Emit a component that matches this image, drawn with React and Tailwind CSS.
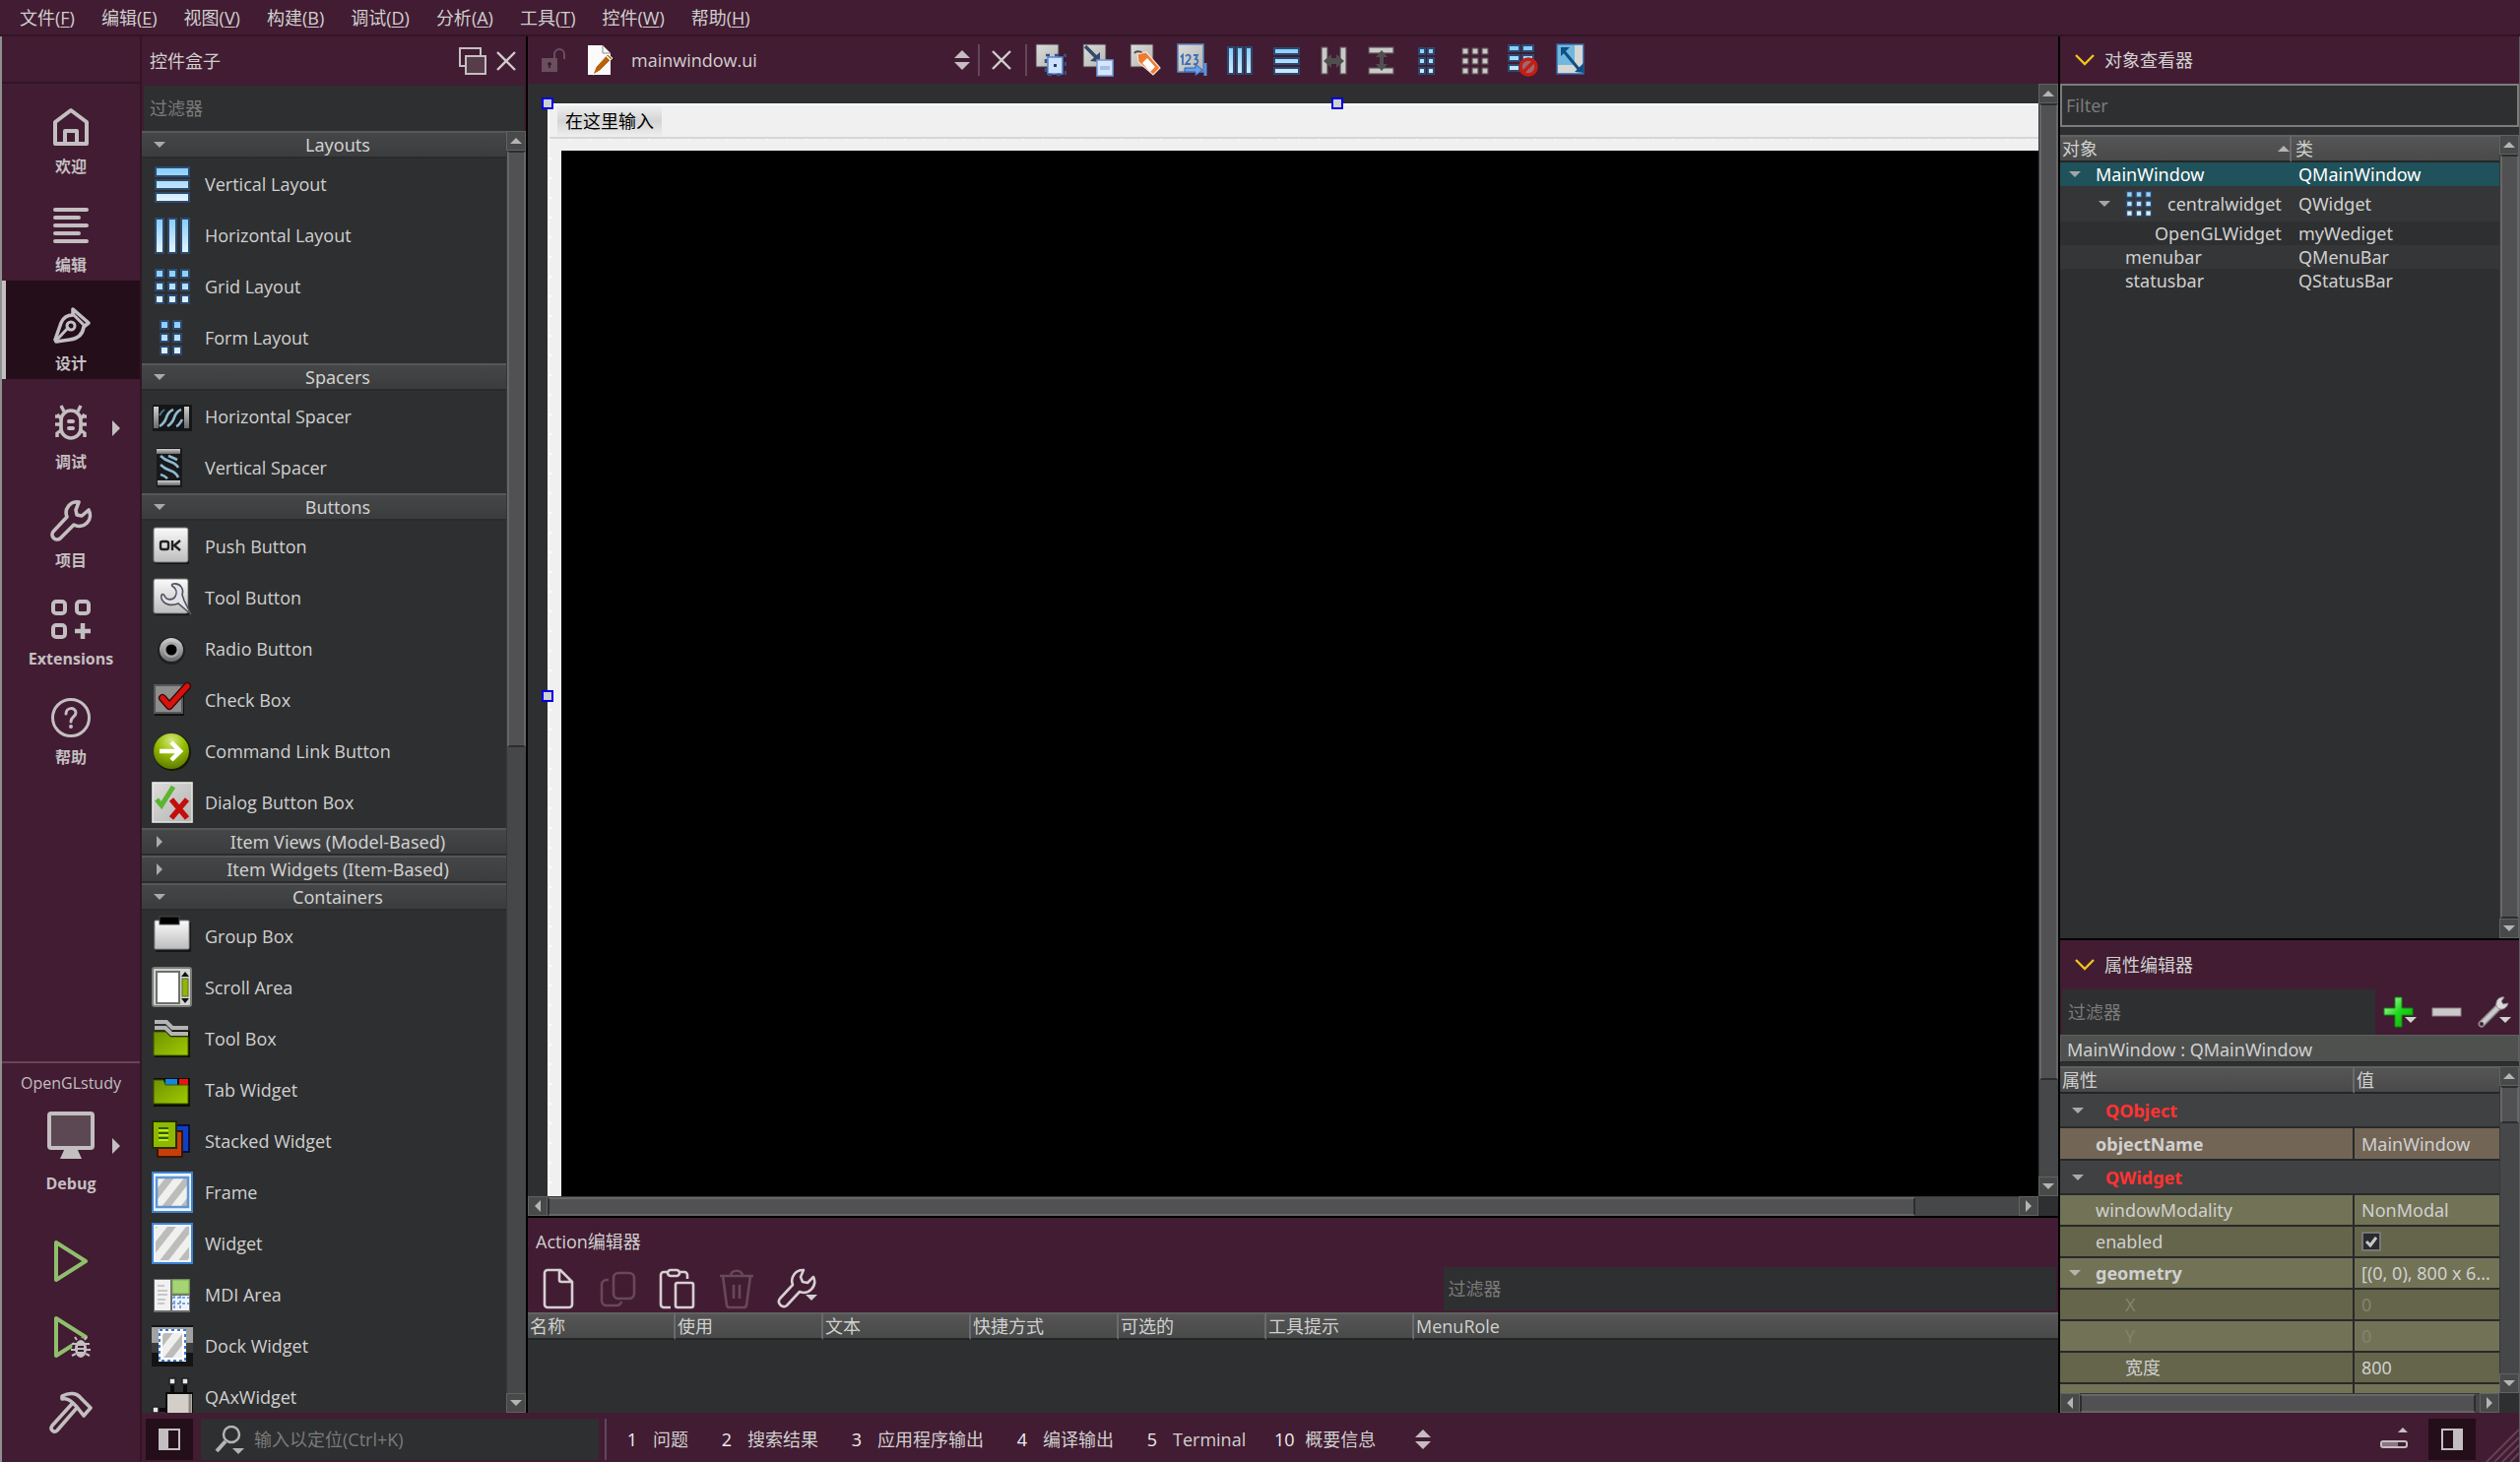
import React, { useState } from 'react';

// Shared svg helpers

const Tri = ({ dir = 'down', size = 'size-3', className = '' }) => {
  const points = {
    down: '0,3 12,3 6,9',
    up: '0,9 12,9 6,3',
    right: '3,0 9,6 3,12',
    left: '9,0 3,6 9,12',
  };
  return (
    <svg viewBox="0 0 12 12" className={`shrink-0 ${size} ${className}`}>
      <polygon points={points[dir]} fill="currentColor" />
    </svg>
  );
};

const UpDown = ({ className = '' }) => (
  <svg viewBox="0 0 16 20" className={`h-5 w-4 shrink-0 text-[#c6bcc2] ${className}`}>
    <path d="M0 8 8 0l8 8zM0 12l8 8 8-8z" fill="currentColor" />
  </svg>
);

const Gradients = () => (
  <svg width="0" height="0" className="absolute" aria-hidden="true">
    <defs>
      <linearGradient id="blue" x1="0" y1="0" x2="0" y2="42" gradientUnits="userSpaceOnUse">
        <stop offset="0.1" stopColor="#86cdfb" />
        <stop offset="0.9" stopColor="#e4f4ff" />
      </linearGradient>
      <linearGradient id="paper" x1="0" y1="0" x2="0" y2="1">
        <stop offset="0" stopColor="#fafafa" />
        <stop offset="1" stopColor="#bdbdbd" />
      </linearGradient>
      <linearGradient id="paper2" x1="0" y1="0" x2="1" y2="1">
        <stop offset="0" stopColor="#dcdcdc" />
        <stop offset="1" stopColor="#b4b4b0" />
      </linearGradient>
      <linearGradient id="lime" x1="0" y1="0" x2="1" y2="1">
        <stop offset="0" stopColor="#6f9200" />
        <stop offset="1" stopColor="#9fcb00" />
      </linearGradient>
      <linearGradient id="metal" x1="0" y1="0" x2="0" y2="1">
        <stop offset="0" stopColor="#d0d0d0" />
        <stop offset="1" stopColor="#6a6a6a" />
      </linearGradient>
      <radialGradient id="ball" cx="0.5" cy="0.2" r="0.8">
        <stop offset="0" stopColor="#d4e87c" />
        <stop offset="0.5" stopColor="#94bb00" />
        <stop offset="1" stopColor="#5f7b00" />
      </radialGradient>
      <linearGradient id="green" x1="0" y1="0" x2="1" y2="1">
        <stop offset="0" stopColor="#d6ffd0" />
        <stop offset="0.5" stopColor="#1fd81b" />
        <stop offset="1" stopColor="#08a806" />
      </linearGradient>
      <pattern id="hatch" width="15" height="15" patternUnits="userSpaceOnUse" patternTransform="rotate(38)">
        <rect width="15" height="15" fill="#f0f0ee" />
        <rect width="7" height="15" fill="#bcbcba" />
      </pattern>
    </defs>
  </svg>
);

const cell = { fill: 'url(#blue)', stroke: '#2d4a70', strokeWidth: 2 };
const grayCell = { fill: '#c9c9c7', stroke: '#5e5258', strokeWidth: 1.2 };

const boxIcons = {
  vlayout: [4, 17, 30].map((y) => <rect key={y} x="4" y={y} width="34" height="9" {...cell} />),
  hlayout: [4, 17, 30].map((x) => <rect key={x} x={x} y="4" width="8" height="35" {...cell} />),
  grid: [4, 17, 30].map((y) =>
    [4, 17, 30].map((x) => <rect key={`${x}-${y}`} x={x} y={y} width="8" height="8" {...cell} />)
  ),
  form: [4, 17, 30].map((y) =>
    [9, 22].map((x) => <rect key={`${x}-${y}`} x={x} y={y} width="8" height="8" {...cell} />)
  ),
  hspacer: (
    <>
      <rect x="1" y="9" width="40" height="27" fill="#151617" />
      <rect x="2" y="11" width="5" height="22" fill="url(#metal)" />
      <rect x="33" y="11" width="5" height="22" fill="url(#metal)" />
      <path d="M8 31q5-3 7-9t7-8M16 31q5-3 7-9t7-8M25 31q3-1 6-7" fill="none" stroke="#8fb9cf" strokeWidth="2.6" />
      <path d="M8 20q2-4 5-6" fill="none" stroke="#4b748a" strokeWidth="2" />
    </>
  ),
  vspacer: (
    <>
      <rect x="5" y="1" width="26" height="40" fill="#17191a" />
      <rect x="5" y="2" width="24" height="5" fill="url(#metal)" />
      <rect x="6" y="34" width="23" height="5" fill="url(#metal)" />
      <path d="M9 9q4 4 10 6t8 6M9 18q4 4 10 6t8 7M17 9q5 2 9 4M9 28q4 1 7 4" fill="none" stroke="#8fb9cf" strokeWidth="2.6" />
    </>
  ),
  push: (
    <>
      <rect x="3" y="4" width="35" height="35" rx="2" fill="#111" />
      <rect x="2" y="2" width="35" height="35" rx="2" fill="url(#paper)" stroke="#777" />
      <rect x="9" y="16" width="8" height="8" rx="2" fill="none" stroke="#222" strokeWidth="2.4" />
      <path d="M21 15v10M29 15l-6 5 6 5" fill="none" stroke="#222" strokeWidth="2.4" />
    </>
  ),
  tool: (
    <>
      <rect x="3" y="4" width="35" height="35" rx="2" fill="#111" />
      <rect x="2" y="2" width="35" height="35" rx="2" fill="url(#paper)" stroke="#777" />
      <path d="M22 7c7-1 11 5 9 11l2 6 7 14-13-11c-7 3-15 1-17-5-1-4 1-6 3-3 2 5 8 5 11 1 2-4 1-8-2-10-2-1-2-3 0-3z" fill="#e2e2ec" stroke="#505058" strokeWidth="1.6" />
    </>
  ),
  radio: (
    <>
      <circle cx="20" cy="23" r="14" fill="#1f2021" />
      <circle cx="20" cy="22" r="12" fill="url(#metal)" />
      <circle cx="20" cy="22" r="8" fill="#a6a6a6" />
      <circle cx="20" cy="22" r="5.5" fill="#000" />
    </>
  ),
  check: (
    <>
      <rect x="3" y="7" width="30" height="30" fill="#111" />
      <rect x="3" y="6" width="28" height="28" fill="#8d8d8b" stroke="#55585a" strokeWidth="2" />
      <path d="m11 19 7 8L36 7" fill="none" stroke="#3a0605" strokeWidth="8" strokeLinecap="round" strokeLinejoin="round" />
      <path d="m11 19 7 8L36 7" fill="none" stroke="#d5120f" strokeWidth="5.5" strokeLinecap="round" strokeLinejoin="round" />
    </>
  ),
  link: (
    <>
      <circle cx="21" cy="22" r="19" fill="#151a05" />
      <circle cx="20" cy="21" r="18" fill="url(#ball)" />
      <path d="M8 21h19M20 12l9 9-9 9" fill="none" stroke="#fff" strokeWidth="4.5" />
    </>
  ),
  dialog: (
    <>
      <rect x="0" y="0" width="42" height="42" fill="#8e8e8c" />
      <rect x="1" y="1" width="40" height="40" fill="url(#paper2)" stroke="#f5f5f5" />
      <path d="m5 18 5 6L22 5" fill="none" stroke="#5cb531" strokeWidth="5" />
      <path d="m20 18 16 19M36 18 20 37" fill="none" stroke="#c40d0d" strokeWidth="5.5" />
    </>
  ),
  group: (
    <>
      <rect x="4" y="7" width="36" height="30" fill="#151617" />
      <rect x="3" y="5" width="35" height="29" rx="1" fill="url(#paper)" stroke="#8d8d8d" />
      <rect x="8" y="1" width="20" height="8" fill="#000" stroke="#4b4b4b" strokeWidth="1" />
    </>
  ),
  scroll: (
    <>
      <rect x="1" y="1" width="39" height="39" rx="2" fill="#d4d4d2" stroke="#7c7c7a" strokeWidth="2" />
      <rect x="5" y="5" width="23" height="32" fill="#fff" stroke="#6f6f6d" strokeWidth="2" />
      <path d="m34 5 4 5h-8zM34 37l4-5h-8z" fill="#111" />
      <rect x="31" y="12" width="6" height="18" fill="#8fb800" stroke="#5e6b32" />
    </>
  ),
  toolbox: (
    <>
      <rect x="3" y="13" width="36" height="27" fill="#0d0f05" />
      <path d="M3 4h12l6 6h16M3 10h11l6 6h17" fill="none" stroke="#b4b4b4" strokeWidth="4" />
      <path d="M2 14h12l5 5h18v19H2z" fill="url(#lime)" stroke="#3f5200" />
    </>
  ),
  tab: (
    <>
      <rect x="2" y="9" width="37" height="29" fill="#0d0f05" />
      <rect x="14" y="10" width="12" height="6" fill="#1287e0" />
      <rect x="28" y="10" width="9" height="6" fill="#ee1111" />
      <path d="M2 11h10l2 5h23v19H2z" fill="url(#lime)" stroke="#3f5200" />
    </>
  ),
  stacked: (
    <>
      <rect x="19" y="5" width="19" height="27" fill="#0d3fc9" stroke="#06103a" strokeWidth="2" />
      <rect x="6" y="11" width="25" height="26" fill="#c43f0a" stroke="#3b1304" strokeWidth="2" />
      <rect x="1" y="1" width="24" height="27" fill="#8fb800" stroke="#232b05" strokeWidth="2" />
      <path d="M7 8h10M7 13h10M7 18h10" stroke="#2c5c07" strokeWidth="2" />
      <path d="M7 10h10M7 15h10M7 20h10" stroke="#c3ea16" strokeWidth="2" />
    </>
  ),
  frame: (
    <>
      <rect x="1" y="1" width="40" height="40" fill="#eef4fb" stroke="#3d83d3" strokeWidth="2" />
      <rect x="5" y="6" width="32" height="30" fill="url(#hatch)" stroke="#5f96d6" strokeWidth="2.5" />
    </>
  ),
  widget: (
    <>
      <rect x="1" y="1" width="40" height="40" fill="#eef4fb" stroke="#3d83d3" strokeWidth="2" />
      <rect x="4" y="4" width="34" height="34" fill="url(#hatch)" />
    </>
  ),
  mdi: (
    <>
      <rect x="2" y="5" width="37" height="34" fill="#6c6d6d" />
      <rect x="3" y="6" width="16" height="31" fill="#f1f1f1" />
      <path d="M6 12h7M6 17h10M6 21h10M6 26h8M6 30h7" stroke="#b9b9b9" strokeWidth="1.5" />
      <rect x="21" y="6" width="17" height="14" fill="#a5d475" stroke="#7ba84d" />
      <rect x="21" y="22" width="17" height="15" fill="#eef3fa" />
      <path d="M21 24h17M23 22v15M29 22v15M21 30h17" stroke="#7ba3dc" strokeWidth="2" strokeDasharray="3 2" />
    </>
  ),
  dock: (
    <>
      <rect width="42" height="42" fill="#141414" />
      <rect y="2" width="42" height="16" fill="#a2a2a2" />
      <rect y="18" width="42" height="10" fill="#3d3d3d" />
      <rect x="9" y="6" width="24" height="29" fill="url(#hatch)" stroke="#fff" strokeWidth="4" />
      <rect x="8" y="5" width="26" height="31" fill="none" stroke="#3a7bd0" strokeWidth="2" strokeDasharray="3 3" />
    </>
  ),
  qax: (
    <>
      <path d="M21 4v14M34 4v14M3 34h14" stroke="#0a0a0a" strokeWidth="4" />
      <rect x="15" y="17" width="27" height="28" fill="#d3cfc8" stroke="#0a0a0a" strokeWidth="2" />
      <path d="M39 18v26" stroke="#8b8883" strokeWidth="3" />
      <rect x="18" y="2" width="6" height="6" fill="#e8e8e8" stroke="#222" strokeWidth="1.5" />
      <rect x="31" y="2" width="6" height="6" fill="#e8e8e8" stroke="#222" strokeWidth="1.5" />
      <rect x="1" y="31" width="6" height="6" fill="#e8e8e8" stroke="#222" strokeWidth="1.5" />
    </>
  ),
};

const widgetGroups = [
  {
    name: 'Layouts',
    open: true,
    items: [['vlayout', 'Vertical Layout'], ['hlayout', 'Horizontal Layout'], ['grid', 'Grid Layout'], ['form', 'Form Layout']],
  },
  { name: 'Spacers', open: true, items: [['hspacer', 'Horizontal Spacer'], ['vspacer', 'Vertical Spacer']] },
  {
    name: 'Buttons',
    open: true,
    items: [
      ['push', 'Push Button'],
      ['tool', 'Tool Button'],
      ['radio', 'Radio Button'],
      ['check', 'Check Box'],
      ['link', 'Command Link Button'],
      ['dialog', 'Dialog Button Box'],
    ],
  },
  { name: 'Item Views (Model-Based)', open: false, items: [] },
  { name: 'Item Widgets (Item-Based)', open: false, items: [] },
  {
    name: 'Containers',
    open: true,
    items: [
      ['group', 'Group Box'],
      ['scroll', 'Scroll Area'],
      ['toolbox', 'Tool Box'],
      ['tab', 'Tab Widget'],
      ['stacked', 'Stacked Widget'],
      ['frame', 'Frame'],
      ['widget', 'Widget'],
      ['mdi', 'MDI Area'],
      ['dock', 'Dock Widget'],
      ['qax', 'QAxWidget'],
    ],
  },
];

// Scrollbars: size is a percentage of the track

const ScrollButton = ({ dir }) => (
  <button
    aria-label={dir}
    className="flex size-5 shrink-0 items-center justify-center border border-[#606162] bg-[#484949] text-[#b4b4b4]"
  >
    <Tri dir={dir} />
  </button>
);

const VScroll = ({ size }) => (
  <div className="flex w-5 shrink-0 flex-col bg-[#464748]">
    <ScrollButton dir="up" />
    <div className="min-h-0 flex-1 border-l border-[#363738]">
      <div className="border-2 border-x-[#666768] border-t-[#2c2d2e] border-b-[#2c2d2e] bg-[#515153]" style={{ height: `${size}%` }} />
    </div>
    <ScrollButton dir="down" />
  </div>
);

const HScroll = ({ size }) => (
  <div className="flex h-5 min-w-0 flex-1 bg-[#464748]">
    <ScrollButton dir="left" />
    <div className="min-w-0 flex-1 border-t border-[#363738]">
      <div className="h-full border-2 border-y-[#666768] border-r-[#2c2d2e] border-l-[#2c2d2e] bg-[#515153]" style={{ width: `${size}%` }} />
    </div>
    <ScrollButton dir="right" />
  </div>
);

// Menu bar

const menus = [
  ['文件', 'F'],
  ['编辑', 'E'],
  ['视图', 'V'],
  ['构建', 'B'],
  ['调试', 'D'],
  ['分析', 'A'],
  ['工具', 'T'],
  ['控件', 'W'],
  ['帮助', 'H'],
];

const MenuBar = () => (
  <nav className="flex h-[37px] shrink-0 items-center gap-[3px] border-b-2 border-[#331526] pl-2">
    {menus.map(([label, key]) => (
      <button key={key} className="px-3">
        {label}(<u className="underline-offset-2">{key}</u>)
      </button>
    ))}
  </nav>
);

// Mode selector

const modeIcons = {
  welcome: (
    <path d="M4 15v22h32V15L20 3zM14 37V24h12v13" fill="none" stroke="currentColor" strokeWidth="4" strokeLinejoin="round" />
  ),
  edit: (
    <path d="M4 4h32M4 12h24M4 20h32M4 28h24M4 36h32" stroke="currentColor" strokeWidth="4" strokeLinecap="round" />
  ),
  design: (
    <>
      <path d="M22 5 38 19l-5 4c-1 8-7 12-14 13L5 38 4 36l6-17c2-5 6-8 12-8z" fill="none" stroke="currentColor" strokeWidth="3.6" strokeLinejoin="round" />
      <path d="m22 10 12 12M4 38l14-15" stroke="currentColor" strokeWidth="3" />
      <circle cx="20" cy="22" r="4" fill="none" stroke="currentColor" strokeWidth="3" />
    </>
  ),
  debug: (
    <>
      <rect x="10" y="8" width="20" height="28" rx="10" fill="none" stroke="currentColor" strokeWidth="3.6" />
      <path d="m13 9-3-6M27 9l3-6M10 16l-4-4M10 22H4M10 28l-4 3v4M30 16l4-4M30 22h6M30 28l4 3v4M4 14h4M36 14h-4" fill="none" stroke="currentColor" strokeWidth="3.4" />
      <path d="M18 19h4M18 26h4" stroke="currentColor" strokeWidth="4" strokeLinecap="round" />
    </>
  ),
  project: (
    <path d="M28 1a11 11 0 0 0-12 15L2 31a5 5 0 0 0 7 7l14-14A11 11 0 0 0 38 9l-7 6-5-1-1-5z" fill="none" stroke="currentColor" strokeWidth="3.6" strokeLinejoin="round" />
  ),
  extensions: (
    <>
      <rect x="2" y="2" width="12" height="12" rx="3" fill="none" stroke="currentColor" strokeWidth="4" />
      <rect x="26" y="2" width="12" height="12" rx="3" fill="none" stroke="currentColor" strokeWidth="4" />
      <rect x="2" y="26" width="12" height="12" rx="3" fill="none" stroke="currentColor" strokeWidth="4" />
      <path d="M32 24v16M24 32h16" stroke="currentColor" strokeWidth="4.5" />
    </>
  ),
  help: (
    <>
      <circle cx="20" cy="20" r="18.5" fill="none" stroke="currentColor" strokeWidth="3" />
      <path d="M15 16c0-7 10-7 10-1 0 4-5 4-5 9" fill="none" stroke="currentColor" strokeWidth="3" strokeLinecap="round" />
      <circle cx="20" cy="29" r="2" fill="currentColor" />
    </>
  ),
};

const modes = [
  ['welcome', '欢迎'],
  ['edit', '编辑'],
  ['design', '设计'],
  ['debug', '调试'],
  ['project', '项目'],
  ['extensions', 'Extensions'],
  ['help', '帮助'],
];

const ModeBar = () => {
  const [mode, setMode] = useState('design');

  return (
    <aside className="flex w-[144px] shrink-0 flex-col border-r-2 border-l-2 border-r-[#331526] border-l-[#8f9191] text-base text-[#c3bfc1]">
      <div className="h-12 shrink-0 border-b-2 border-[#331526]" />
      {modes.map(([id, label]) => (
        <button
          key={id}
          onClick={() => setMode(id)}
          className={`relative flex h-[100px] shrink-0 flex-col items-center gap-2 pt-6 font-bold ${
            mode === id ? 'bg-[#230e1a] shadow-[inset_4px_0_0_#c3bfc1]' : ''
          }`}
        >
          <svg viewBox="0 0 40 40" className="size-10 overflow-visible">
            {modeIcons[id]}
          </svg>
          <span className="leading-6">{label}</span>
          {id === 'debug' && <Tri dir="right" size="size-4" className="absolute top-[42px] right-4" />}
        </button>
      ))}
      <div className="flex-1" />
      <button className="relative flex flex-col items-center border-t-2 border-[#664657] pt-2 pb-7">
        <span className="leading-6">OpenGLstudy</span>
        <svg viewBox="0 0 50 50" className="mt-4 size-[50px]">
          <rect x="3" y="3" width="44" height="35" rx="2" fill="#5c4852" stroke="currentColor" strokeWidth="4" />
          <path d="M19 38h12l5 11H14z" fill="currentColor" />
        </svg>
        <span className="mt-3 leading-6 font-bold">Debug</span>
        <Tri dir="right" size="size-4" className="absolute top-19 right-4" />
      </button>
      <button aria-label="运行" className="flex h-[77px] shrink-0 items-center justify-center">
        <svg viewBox="0 0 40 44" className="h-11 w-10">
          <path d="M5 3v38l30-19z" fill="none" stroke="#8fbf6c" strokeWidth="4" strokeLinejoin="round" />
        </svg>
      </button>
      <button aria-label="调试运行" className="flex h-[77px] shrink-0 items-center justify-center">
        <svg viewBox="0 0 40 44" className="h-11 w-10 overflow-visible">
          <path d="M5 3v38l30-19z" fill="none" stroke="#8fbf6c" strokeWidth="4" strokeLinejoin="round" />
          <ellipse cx="30" cy="34" rx="9" ry="11" fill="#421c32" />
          <ellipse cx="30" cy="34" rx="6" ry="9" fill="currentColor" />
          <path d="M21 29h18M20 35h20M21 41l4-2M39 41l-4-2M26 25l-2-3M34 25l2-3" stroke="currentColor" strokeWidth="2" />
          <path d="M27 32h6M27 36h6" stroke="#421c32" strokeWidth="2" />
        </svg>
      </button>
      <button aria-label="构建" className="mb-3 flex h-[77px] shrink-0 items-center justify-center">
        <svg viewBox="0 0 46 44" className="h-11 w-[46px]">
          <path d="M14 5c8-4 15-3 19 2l10 10-7 8-7-9-4-4c-3-3-6-5-11-4zM24 13 4 35c-3 4 2 8 5 5l20-23" fill="none" stroke="currentColor" strokeWidth="3.6" strokeLinejoin="round" />
        </svg>
      </button>
    </aside>
  );
};

// Widget box

const headerBg = 'bg-linear-to-b from-[#454647] to-[#3b3c3d]';

const WidgetBox = () => (
  <section className="flex w-[390px] shrink-0 flex-col">
    <header className="flex h-[50px] shrink-0 items-center pr-2.5 pl-2">
      <h2 className="flex-1">控件盒子</h2>
      <button aria-label="浮动">
        <svg viewBox="0 0 28 28" className="size-7">
          <rect x="1" y="1" width="21" height="18" fill="none" stroke="#c3bfc1" strokeWidth="2" />
          <rect x="7" y="9" width="20" height="18" fill="#573c4a" stroke="#c3bfc1" strokeWidth="2" />
        </svg>
      </button>
      <button aria-label="关闭" className="ml-2.5">
        <svg viewBox="0 0 20 20" className="size-5">
          <path d="m1 1 18 18M19 1 1 19" stroke="#d0cbce" strokeWidth="2.4" />
        </svg>
      </button>
    </header>
    <input
      aria-label="过滤器"
      placeholder="过滤器"
      className="mx-0.5 h-[46px] shrink-0 bg-[#2e2f30] px-1.5 outline-none placeholder:text-[#7b7b7b]"
    />
    <div className="flex min-h-0 flex-1 bg-[#2e2f30]">
      <div className="min-w-0 flex-1 overflow-hidden">
        {widgetGroups.map((group) => (
          <div key={group.name}>
            <button
              className={`relative flex h-7 w-full items-center justify-center border-t-2 border-b-2 border-t-[#565758] border-b-[#2a2b2c] font-['Noto_Sans',sans-serif] leading-6 ${headerBg}`}
            >
              <Tri dir={group.open ? 'down' : 'right'} className="absolute left-3 text-[#aaaaaa]" />
              <span className="pl-7">{group.name}</span>
            </button>
            {group.items.map(([icon, label]) => (
              <button key={icon} className="flex h-[52px] w-full items-center gap-3 pl-2.5 text-left">
                <svg viewBox="0 0 42 42" className="size-[42px] shrink-0">
                  {boxIcons[icon]}
                </svg>
                {label}
              </button>
            ))}
          </div>
        ))}
      </div>
      <VScroll size={48} />
    </div>
  </section>
);

// Form editor toolbar

const Sheet = () => <rect x="1" y="1" width="23" height="23" fill="url(#paper2)" stroke="#4a3a42" />;

const toolIcons = [
  ['编辑控件', (
    <>
      <Sheet />
      <rect x="13" y="14" width="15" height="17" fill="#cfe1fb" stroke="#4f86d2" strokeWidth="1.5" />
      <rect x="11" y="12" width="20" height="20" fill="none" stroke="#34557f" strokeWidth="2.5" strokeDasharray="4 5" />
      <rect x="19" y="21" width="3" height="3" fill="#1f3f70" />
    </>
  )],
  ['编辑信号/槽', (
    <>
      <Sheet />
      <path d="M3 3l11 11" stroke="#34496b" strokeWidth="3.5" />
      <path d="M18 19V9L8 18z" fill="#34496b" />
      <rect x="15" y="17" width="16" height="16" fill="#d6e6fd" stroke="#6f9be0" strokeWidth="1.5" />
      <path d="M18 23h10v4H18z" fill="#a3bfea" />
    </>
  )],
  ['编辑伙伴', (
    <>
      <Sheet />
      <path d="M5 10c2-3 8-2 9 2" fill="none" stroke="#4b4b4b" strokeWidth="2" />
      <path d="m8 11 9-2 14 16-7 7L9 19z" fill="#ef7b31" stroke="#fbe2d2" strokeWidth="1.2" />
      <path d="m18 15 8 9-5 5-8-9z" fill="#fff" />
    </>
  )],
  ['编辑 Tab 顺序', (
    <>
      <rect x="1" y="1" width="26" height="28" fill="url(#paper2)" stroke="#5c86c0" strokeWidth="1.5" />
      <path d="M4 14l2-2v10M9 13c3-3 6 0 4 3l-4 5h5M17 12h4l-2 4c4 0 3 6-2 5" fill="none" stroke="#3c6fb9" strokeWidth="1.8" />
      <path d="M8 25h11v-4l7 6-7 6v-4H8z" fill="#6aa0ea" stroke="#2d5fa8" strokeWidth="1" />
      <path d="M29 20v13" stroke="#5c94e4" strokeWidth="3" />
    </>
  )],
  ['水平布局', [4, 13, 22].map((x) => <rect key={x} x={x} y="4" width="6" height="27" {...cell} />)],
  ['垂直布局', [5, 15, 25].map((y) => <rect key={y} x="3" y={y} width="25" height="6" {...cell} />)],
  ['水平分裂器布局', (
    <>
      <rect x="3" y="4" width="6" height="27" {...grayCell} />
      <rect x="22" y="4" width="6" height="27" {...grayCell} />
      <path d="m5 18 8-7v4h5v-4l8 7-8 7v-4h-5v4z" fill="#4f4f4f" />
    </>
  )],
  ['垂直分裂器布局', (
    <>
      <rect x="3" y="4" width="25" height="6" {...grayCell} />
      <rect x="3" y="25" width="25" height="6" {...grayCell} />
      <path d="m16 7 6 7h-4v7h4l-6 7-6-7h4v-7h-4z" fill="#4f4f4f" />
    </>
  )],
  ['表单布局', [5, 15, 25].map((y) => [6, 15].map((x) => <rect key={`${x}-${y}`} x={x} y={y} width="6" height="6" {...cell} />))],
  ['栅格布局', [5, 15, 25].map((y) => [2, 12, 22].map((x) => <rect key={`${x}-${y}`} x={x} y={y} width="6" height="6" {...grayCell} />))],
  ['打破布局', (
    <>
      {[2, 12, 22].map((y) => (
        <React.Fragment key={y}>
          <rect x="1" y={y} width="11" height="6" {...cell} />
          <rect x="15" y={y} width="11" height="6" {...cell} />
        </React.Fragment>
      ))}
      <circle cx="21" cy="24" r="8" fill="#9c6a6c" stroke="#c41d18" strokeWidth="3.5" />
      <path d="m16 29 10-10" stroke="#c41d18" strokeWidth="3.5" />
    </>
  )],
  ['调整大小', (
    <>
      <rect x="2" y="1" width="27" height="30" fill="#d7d7d3" stroke="#2a65ad" strokeWidth="1.5" />
      <rect x="3" y="2" width="17" height="20" fill="#72b7dd" />
      <path d="m9 8 15 18" stroke="#0d4f86" strokeWidth="3" />
      <path d="M6 4h9l-9 9zM29 30v-10l-9 9z" fill="#0d4f86" />
    </>
  )],
];

const Separator = ({ className = '' }) => <div className={`h-8 w-0.5 shrink-0 bg-[#62465a] ${className}`} />;

const FormToolbar = () => (
  <div className="flex h-12 shrink-0 items-center pl-3.5">
    <svg viewBox="0 0 24 26" className="mr-[23px] h-[26px] w-6 shrink-0">
      <rect x="0" y="11" width="16" height="14" fill="#6a4f5e" />
      <path d="M13 11V7a5 5 0 0 1 10 0v5" fill="none" stroke="#6a4f5e" strokeWidth="2" />
      <path d="M8 15v6M6 17h4" stroke="#421c32" strokeWidth="2" />
    </svg>
    <svg viewBox="0 0 28 32" className="mr-4 h-8 w-7 shrink-0">
      <path d="M0 1h15l8 8v22H0z" fill="#fbfbfb" />
      <path d="M15 1v8h8" fill="none" stroke="#8b8b8b" />
      <path d="M5 31l3-8L20 10l5 4-13 13z" fill="#b8620c" stroke="#fff" strokeWidth="1" />
      <path d="m19 12 4 4" stroke="#fff" strokeWidth="1.5" />
    </svg>
    <select aria-label="打开的文档" className="w-[328px] appearance-none bg-transparent outline-none">
      <option>mainwindow.ui</option>
    </select>
    <UpDown />
    <Separator className="ml-2" />
    <button aria-label="关闭文档" className="mr-3.5 ml-3">
      <svg viewBox="0 0 20 20" className="size-5">
        <path d="m1 1 18 18M19 1 1 19" stroke="#d0cbce" strokeWidth="2.4" />
      </svg>
    </button>
    <Separator className="mr-2" />
    <div className="flex gap-4">
      {toolIcons.map(([label, icon]) => (
        <button key={label} aria-label={label}>
          <svg viewBox="0 0 32 34" className="h-[34px] w-8">
            {icon}
          </svg>
        </button>
      ))}
    </div>
  </div>
);

const Handle = ({ className }) => (
  <span className={`absolute size-3 border-2 border-[#0000e6] bg-[#d0d0d0] ${className}`} />
);

const FormEditor = () => (
  <div className="flex min-h-0 flex-1 flex-col bg-[#2e2f30]">
    <div className="flex min-h-0 flex-1">
      <div className="relative flex min-w-0 flex-1 flex-col overflow-hidden pt-5 pl-5">
        <div className="flex flex-1 flex-col border-t-2 border-l-2 border-white bg-[#f0f0f0] bg-[radial-gradient(circle_at_1px_14px,white_1px,transparent_1px)] bg-[size:20px_20px]">
          <div className="flex h-[34px] shrink-0 border-b-2 border-[#d6d6d6] bg-[#f0f0f0] pl-2">
            <button className="bg-linear-to-b from-[#f0f0f0] via-[#d4d4d4] to-[#efefef] px-2 text-black">在这里输入</button>
          </div>
          <div className="mt-3 ml-3 flex-1 bg-black" />
        </div>
        <Handle className="top-3.5 left-3.5" />
        <Handle className="top-3.5 left-[816px]" />
        <Handle className="top-[616px] left-3.5" />
      </div>
      <VScroll size={91} />
    </div>
    <div className="flex shrink-0">
      <HScroll size={93} />
      <div className="size-5" />
    </div>
  </div>
);

// Action editor

const actionIcons = [
  ['新建', '', <path key="p" d="M5 5a3 3 0 0 1 3-3h13l12 12v23a3 3 0 0 1-3 3H8a3 3 0 0 1-3-3zM20 2v10a2 2 0 0 0 2 2h11" />],
  ['复制', 'opacity-25', (
    <React.Fragment key="p">
      <rect x="15" y="5" width="21" height="26" rx="5" />
      <path d="M10 12H8a5 5 0 0 0-5 5v16a5 5 0 0 0 5 5h10a5 5 0 0 0 5-4" />
    </React.Fragment>
  )],
  ['粘贴', '', (
    <React.Fragment key="p">
      <path d="M13 40H6a3 3 0 0 1-3-3V7a3 3 0 0 1 3-3h4M21 4h6a3 3 0 0 1 3 3v4" />
      <rect x="10" y="2" width="12" height="6" rx="3" />
      <rect x="18" y="15" width="18" height="25" rx="2" />
    </React.Fragment>
  )],
  ['删除', 'opacity-25', <path key="p" d="M3 8h34M14 8c0-7 12-7 12 0M6 8l4 30a3 3 0 0 0 3 2h14a3 3 0 0 0 3-2l4-30M17 17v14M23 17v14" />],
  ['配置', '', <path key="p" d="M28 2a11 11 0 0 0-11 15L4 31a5 5 0 0 0 7 7l13-14a11 11 0 0 0 14-15l-6 6-5-1-2-5z" />],
];

const actionColumns = ['名称', '使用', '文本', '快捷方式', '可选的', '工具提示', 'MenuRole'];

const tableHead = 'h-7 bg-linear-to-b from-[#545554] to-[#484a49] border-t-2 border-b-2 border-t-[#606160] border-b-[#242526] text-left font-normal leading-6';

const ActionEditor = () => (
  <section className="flex h-[200px] shrink-0 flex-col border-t-2 border-black">
    <h2 className="px-2 pt-3 leading-6">Action编辑器</h2>
    <div className="flex h-[60px] shrink-0 items-center justify-between pt-3">
      <div className="flex gap-[18px] pl-3">
        {actionIcons.map(([label, tone, icon]) => (
          <button key={label} aria-label={label} className="relative">
            <svg viewBox="0 0 42 42" className={`size-[42px] ${tone}`} fill="none" stroke="#d5cfd2" strokeWidth="2.6" strokeLinejoin="round">
              {icon}
            </svg>
            {label === '配置' && <Tri className="absolute right-0 bottom-1.5" />}
          </button>
        ))}
      </div>
      <input
        aria-label="过滤器"
        placeholder="过滤器"
        className="mr-0.5 h-11 w-2/5 bg-[#2e2f30] px-1 outline-none placeholder:text-[#7b7b7b]"
      />
    </div>
    <div className="flex-1 bg-[#2e2f30]">
      <table className="w-full table-fixed border-separate border-spacing-0">
        <thead>
          <tr>
            {actionColumns.map((col) => (
              <th
                key={col}
                className={`pl-0.5 ${tableHead} ${col === 'MenuRole' ? '' : 'w-[150px] border-r-2 border-r-[#6a6b6a]'}`}
              >
                {col}
              </th>
            ))}
          </tr>
        </thead>
      </table>
    </div>
  </section>
);

// Right column

const PanelTitle = ({ children, height = 'h-12' }) => (
  <header className={`flex shrink-0 items-center gap-2.5 pl-[15px] ${height}`}>
    <svg viewBox="0 0 20 12" className="h-3 w-5">
      <path d="m1 1 9 9 9-9" fill="none" stroke="#f0c419" strokeWidth="2.4" />
    </svg>
    <h2>{children}</h2>
  </header>
);

const objects = [
  { name: 'MainWindow', cls: 'QMainWindow', row: 'h-6 bg-[#1f525b] text-white', pad: 'pl-[9px] gap-[15px]', tri: true },
  { name: 'centralwidget', cls: 'QWidget', row: 'h-9 bg-[#353637]', pad: 'pl-[39px] gap-[15px]', tri: true, icon: true },
  { name: 'OpenGLWidget', cls: 'myWediget', row: 'h-6', pad: 'pl-[96px]' },
  { name: 'menubar', cls: 'QMenuBar', row: 'h-6 bg-[#353637]', pad: 'pl-[66px]' },
  { name: 'statusbar', cls: 'QStatusBar', row: 'h-6', pad: 'pl-[66px]' },
];

const ObjectInspector = () => (
  <section className="flex min-h-0 flex-1 flex-col">
    <PanelTitle>对象查看器</PanelTitle>
    <div className="flex min-h-0 flex-1 flex-col bg-[#2e2f30]">
      <input
        aria-label="Filter"
        placeholder="Filter"
        className="mb-2 h-11 shrink-0 border-2 border-[#7c7c7c] bg-[#2e2f30] px-1 outline-none placeholder:text-[#7b7b7b]"
      />
      <div className="flex min-h-0 flex-1">
        <div className="min-w-0 flex-1">
          <table className="w-full table-fixed border-separate border-spacing-0 leading-6">
            <thead>
              <tr>
                <th className={`w-[235px] border-r-2 border-r-[#6a6b6a] pl-0.5 ${tableHead}`}>
                  <span className="flex items-center justify-between">
                    对象
                    <Tri dir="up" className="text-[#b4b4b4]" />
                  </span>
                </th>
                <th className={`pl-1 ${tableHead}`}>类</th>
              </tr>
            </thead>
            <tbody>
              {objects.map((obj) => (
                <tr key={obj.name} className={obj.row}>
                  <td>
                    <span className={`flex items-center ${obj.pad}`}>
                      {obj.tri && <Tri className="text-[#a3a5a5]" />}
                      {obj.icon && (
                        <svg viewBox="2 2 38 38" className="size-7 shrink-0">
                          {boxIcons.grid}
                        </svg>
                      )}
                      {obj.name}
                    </span>
                  </td>
                  <td className="pl-[7px]">{obj.cls}</td>
                </tr>
              ))}
            </tbody>
          </table>
        </div>
        <VScroll size={100} />
      </div>
    </div>
  </section>
);

const properties = [
  { name: 'QObject', group: true },
  { name: 'objectName', value: 'MainWindow', row: 'h-[33px] bg-[#726555]', bold: true },
  { name: 'QWidget', group: true },
  { name: 'windowModality', value: 'NonModal', row: 'h-8 bg-[#727356]' },
  { name: 'enabled', checked: true, row: 'h-8 bg-[#64654a]' },
  { name: 'geometry', value: '[(0, 0), 800 x 6...', row: 'h-8 bg-[#727356]', bold: true, tri: true },
  { name: 'X', value: '0', row: 'h-8 bg-[#64654a] text-[#84846e]', sub: true },
  { name: 'Y', value: '0', row: 'h-8 bg-[#727356] text-[#84846e]', sub: true },
  { name: '宽度', value: '800', row: 'h-8 bg-[#64654a]', sub: true },
];

const PropertyRow = ({ prop }) => {
  if (prop.group) {
    return (
      <tr className="h-[35px] bg-[#404142]">
        <td colSpan={2} className="border-b-2 border-[#28292a]">
          <span className="flex items-center gap-[22px] pl-3 font-bold text-[#ff3333]">
            <Tri className="text-[#a9a9a9]" />
            {prop.name}
          </span>
        </td>
      </tr>
    );
  }
  return (
    <tr className={prop.row}>
      <td className="border-r-2 border-b-2 border-[#28292a]">
        <span className={`flex items-center ${prop.tri ? 'gap-[15px] pl-[9px]' : prop.sub ? 'pl-[66px]' : 'pl-9'} ${prop.bold ? 'font-bold' : ''}`}>
          {prop.tri && <Tri className="text-[#b6b6a8]" />}
          {prop.name}
        </span>
      </td>
      <td className="border-b-2 border-[#28292a] pl-[7px] whitespace-nowrap">
        {prop.checked ? (
          <span className="relative flex">
            <input type="checkbox" defaultChecked aria-label={prop.name} className="size-5 appearance-none border-2 border-[#77777a] bg-[#2a2b2d]" />
            <svg viewBox="0 0 12 12" className="pointer-events-none absolute top-1 left-1 size-3">
              <path d="m1 6 4 4 6-8" fill="none" stroke="#c8c8c8" strokeWidth="3" />
            </svg>
          </span>
        ) : (
          prop.value
        )}
      </td>
    </tr>
  );
};

const PropertyEditor = () => (
  <section className="flex h-[482px] shrink-0 flex-col border-t-2 border-black">
    <PanelTitle height="h-[50px]">属性编辑器</PanelTitle>
    <div className="flex h-[46px] shrink-0 items-center">
      <input
        aria-label="过滤器"
        placeholder="过滤器"
        className="mx-0.5 h-[46px] min-w-0 flex-1 bg-[#2e2f30] px-1.5 outline-none placeholder:text-[#7b7b7b]"
      />
      <div className="flex gap-3.5 pr-2 pl-1.5">
        <button aria-label="添加动态属性" className="relative">
          <svg viewBox="0 0 34 32" className="h-8 w-[34px]">
            <path d="M12 1h7v11h11v7H19v12h-7V19H1v-7h11z" fill="url(#green)" stroke="#0f8a0e" />
          </svg>
          <Tri className="absolute right-0 bottom-0.5" />
        </button>
        <button aria-label="删除动态属性">
          <svg viewBox="0 0 34 32" className="h-8 w-[34px]">
            <rect x="2" y="12" width="29" height="8" fill="#cbc9ca" stroke="#8a8588" />
          </svg>
        </button>
        <button aria-label="配置属性编辑器" className="relative">
          <svg viewBox="0 0 34 32" className="h-8 w-[34px]">
            <path d="M4 28 22 10" stroke="#8c8c8c" strokeWidth="7" strokeLinecap="round" />
            <path d="M4 28 22 10" stroke="#c9c9c9" strokeWidth="4" strokeLinecap="round" />
            <path d="M27 1c-6-1-9 4-8 9 3 5 10 4 12-3l-5 1-2-3z" fill="#dadada" stroke="#8c8c8c" />
            <circle cx="4" cy="28" r="2" fill="#421c32" />
          </svg>
          <Tri className="absolute right-0 bottom-0.5" />
        </button>
      </div>
    </div>
    <div className="flex min-h-0 flex-1 flex-col bg-[#2e2f30]">
      <p className="mb-1 h-7 shrink-0 border border-[#5f605f] border-b-[#242526] bg-[#4f514f] px-1.5 leading-7">MainWindow : QMainWindow</p>
      <div className="flex min-h-0 flex-1">
        <div className="min-w-0 flex-1 overflow-hidden bg-[#727356]">
          <table className="w-full table-fixed border-separate border-spacing-0 leading-6">
            <thead>
              <tr>
                <th className={`w-[299px] border-r-2 border-r-[#6a6b6a] pl-0.5 ${tableHead}`}>属性</th>
                <th className={`pl-0.5 ${tableHead}`}>值</th>
              </tr>
            </thead>
            <tbody>
              {properties.map((prop) => (
                <PropertyRow key={prop.name} prop={prop} />
              ))}
            </tbody>
          </table>
          <div className="h-8 w-[299px] border-r-2 border-[#28292a]" />
        </div>
        <VScroll size={13} />
      </div>
      <div className="flex shrink-0">
        <HScroll size={99} />
        <div className="size-5" />
      </div>
    </div>
  </section>
);

// Status bar

const panes = [
  ['1', '问题'],
  ['2', '搜索结果'],
  ['3', '应用程序输出'],
  ['4', '编译输出'],
  ['5', 'Terminal'],
  ['10', '概要信息'],
];

const StatusBar = () => (
  <footer className="flex h-[50px] shrink-0 items-center pt-1">
    <button aria-label="左侧边栏" className="ml-1 flex h-[42px] w-12 items-center justify-center bg-[#230e1a]">
      <svg viewBox="0 0 22 22" className="size-[22px]">
        <rect x="1" y="1" width="20" height="20" fill="none" stroke="#c3bfc1" strokeWidth="2" />
        <rect x="1" y="1" width="9" height="20" fill="#c3bfc1" />
      </svg>
    </button>
    <label className="ml-2 flex h-[42px] w-[404px] items-center bg-[#2e2f30] pl-3.5">
      <span className="relative">
        <svg viewBox="0 0 30 28" className="h-7 w-[30px]">
          <circle cx="17" cy="9" r="8" fill="none" stroke="#b4b4b4" strokeWidth="2.4" />
          <path d="M11 16 2 26" stroke="#b4b4b4" strokeWidth="4" />
        </svg>
        <Tri className="absolute right-0 -bottom-1 text-[#b4b4b4]" />
      </span>
      <input
        aria-label="定位器"
        placeholder="输入以定位(Ctrl+K)"
        className="ml-2.5 min-w-0 flex-1 bg-transparent outline-none placeholder:text-[#7b7b7b]"
      />
    </label>
    <div className="ml-1.5 h-[42px] w-0.5 bg-[#62465a]" />
    <div className="ml-[15px] flex gap-7">
      {panes.map(([num, label]) => (
        <button key={num} className="flex gap-2.5">
          <span className="min-w-[22px] text-center text-[#eeeeee]">{num}</span>
          {label}
        </button>
      ))}
    </div>
    <button aria-label="更多面板" className="ml-10">
      <UpDown className="block" />
    </button>
    <div className="flex-1" />
    <svg viewBox="0 0 30 24" className="mr-5 h-6 w-[30px]">
      <path d="m19 5 5-5 5 5z" fill="#c3bfc1" />
      <rect x="2" y="14" width="26" height="6" rx="2" fill="none" stroke="#c3bfc1" strokeWidth="2" />
      <rect x="3" y="15" width="16" height="4" fill="#8b7480" />
    </svg>
    <button aria-label="右侧边栏" className="flex h-[42px] w-12 items-center justify-center bg-[#230e1a]">
      <svg viewBox="0 0 22 22" className="size-[22px]">
        <rect x="1" y="1" width="20" height="20" fill="none" stroke="#c3bfc1" strokeWidth="2" />
        <rect x="12" y="1" width="9" height="20" fill="#c3bfc1" />
      </svg>
    </button>
    <svg viewBox="0 0 34 34" className="ml-2.5 size-[34px] self-end">
      <path d="M1 34 34 1M9 34 34 9M17 34l17-17M25 34l9-9" stroke="#634256" strokeWidth="2" />
    </svg>
  </footer>
);

const App = () => (
  <div className="flex h-screen flex-col overflow-hidden bg-[#421c32] font-['Open_Sans','Noto_Sans_CJK_SC',sans-serif] text-lg leading-6 text-[#d0d0d0]">
    <Gradients />
    <MenuBar />
    <div className="flex min-h-0 flex-1 border-r border-[#5b5d5d]">
      <ModeBar />
      <div className="flex min-w-0 flex-1 flex-col">
        <main className="flex min-h-0 flex-1">
          <WidgetBox />
          <div className="flex min-w-0 flex-1 flex-col border-x-2 border-black">
            <FormToolbar />
            <FormEditor />
            <ActionEditor />
          </div>
          <div className="flex w-[466px] shrink-0 flex-col font-['Noto_Sans','Noto_Sans_CJK_SC',sans-serif]">
            <ObjectInspector />
            <PropertyEditor />
          </div>
        </main>
        <StatusBar />
      </div>
    </div>
  </div>
);

export default App;
